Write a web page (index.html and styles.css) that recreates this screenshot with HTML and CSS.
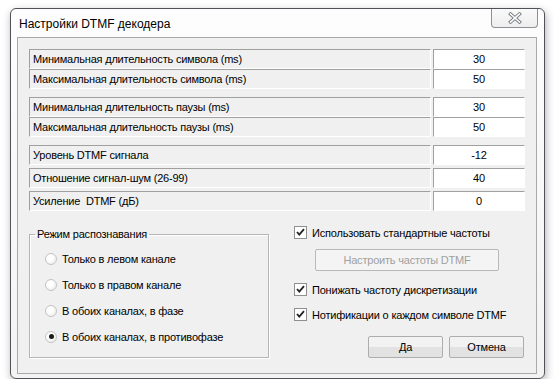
FILE: index.html
```html
<!DOCTYPE html>
<html lang="ru">
<head>
    <meta charset="UTF-8">
    <title>Настройки DTMF декодера</title>
    <link rel="stylesheet" href="styles.css">
</head>
<body>
    <div class="window">
        <div class="titlebar">
            <span class="title">Настройки DTMF декодера</span>
            <button class="close-btn" aria-label="Закрыть">
                <svg width="16" height="12" viewBox="0 0 16 12">
                    <path d="M3.5 2 L12.5 10 M12.5 2 L3.5 10" stroke="#767b80" stroke-width="3.4" stroke-linecap="square" fill="none"/>
                    <path d="M3.5 2 L12.5 10 M12.5 2 L3.5 10" stroke="#ffffff" stroke-width="1.6" stroke-linecap="square" fill="none"/>
                </svg>
            </button>
        </div>

        <div class="client">
            <!-- Symbol timing -->
            <div class="field-group tight">
                <div class="field">
                    <div class="field-label">Минимальная длительность символа (ms)</div>
                    <div class="field-value">30</div>
                </div>
                <div class="field">
                    <div class="field-label">Максимальная длительность символа (ms)</div>
                    <div class="field-value">50</div>
                </div>
            </div>

            <!-- Pause timing -->
            <div class="field-group tight">
                <div class="field">
                    <div class="field-label">Минимальная длительность паузы (ms)</div>
                    <div class="field-value">30</div>
                </div>
                <div class="field">
                    <div class="field-label">Максимальная длительность паузы (ms)</div>
                    <div class="field-value">50</div>
                </div>
            </div>

            <!-- Signal -->
            <div class="field-group loose">
                <div class="field">
                    <div class="field-label">Уровень DTMF сигнала</div>
                    <div class="field-value">-12</div>
                </div>
                <div class="field">
                    <div class="field-label">Отношение сигнал-шум (26-99)</div>
                    <div class="field-value">40</div>
                </div>
                <div class="field">
                    <div class="field-label">Усиление&nbsp; DTMF (дБ)</div>
                    <div class="field-value">0</div>
                </div>
            </div>

            <div class="bottom">
                <fieldset class="groupbox">
                    <legend>Режим распознавания</legend>
                    <label class="radio-row"><span class="radio"></span>Только в левом канале</label>
                    <label class="radio-row"><span class="radio"></span>Только в правом канале</label>
                    <label class="radio-row"><span class="radio"></span>В обоих каналах, в фазе</label>
                    <label class="radio-row"><span class="radio checked"></span>В обоих каналах, в противофазе</label>
                </fieldset>

                <div class="options">
                    <label class="check-row"><span class="checkbox"><svg width="11" height="11" viewBox="0 0 11 11"><path d="M2 5 L4.3 7.6 L9 2.2" stroke="#222" stroke-width="1.8" fill="none"/></svg></span>Использовать стандартные частоты</label>
                    <button class="btn btn-wide" disabled>Настроить частоты DTMF</button>
                    <label class="check-row"><span class="checkbox"><svg width="11" height="11" viewBox="0 0 11 11"><path d="M2 5 L4.3 7.6 L9 2.2" stroke="#222" stroke-width="1.8" fill="none"/></svg></span>Понижать частоту дискретизации</label>
                    <label class="check-row"><span class="checkbox"><svg width="11" height="11" viewBox="0 0 11 11"><path d="M2 5 L4.3 7.6 L9 2.2" stroke="#222" stroke-width="1.8" fill="none"/></svg></span>Нотификации о каждом символе DTMF</label>
                    <div class="actions">
                        <button class="btn">Да</button>
                        <button class="btn">Отмена</button>
                    </div>
                </div>
            </div>
        </div>
    </div>
</body>
</html>
```

FILE: styles.css
```css
* {
    margin: 0;
    padding: 0;
    box-sizing: border-box;
}

body {
    background: #ffffff;
    font-family: "Liberation Sans", Arial, sans-serif;
    font-size: 11px;
    letter-spacing: -0.2px;
    color: #000;
}

.window {
    margin: 8px 0 0 10px;
    width: 535px;
    height: 371px;
    border: 1px solid #4f5358;
    border-radius: 6px;
    background: linear-gradient(#fdfdfd, #f3f3f3);
    box-shadow: 1px 3px 9px rgba(0, 0, 0, 0.3);
    display: flex;
    flex-direction: column;
    padding: 0 7px 4px 6px;
}

.titlebar {
    height: 28px;
    display: flex;
    align-items: flex-start;
    justify-content: space-between;
}

.title {
    font-size: 12px;
    letter-spacing: 0;
    padding: 8px 0 0 2px;
    color: #000;
}

.close-btn {
    width: 47px;
    height: 19px;
    margin-right: -1px;
    border: 1px solid #8d9196;
    border-top: none;
    border-radius: 0 0 4px 4px;
    background: linear-gradient(#fafafa, #eeeeee);
    display: flex;
    align-items: center;
    justify-content: center;
}

.client {
    flex: 1;
    background: #f0f0f0;
    border: 1px solid #a9a9a9;
    padding: 11px 11px 0 11px;
}

.field-group {
    display: flex;
    flex-direction: column;
    margin-bottom: 8px;
}

.field-group.tight {
    gap: 0;
}

.field-group.loose {
    gap: 3px;
}

.field {
    display: flex;
    gap: 2px;
    height: 20px;
}

.field-label,
.field-value {
    border-top: 1px solid #a0a0a0;
    border-left: 1px solid #a0a0a0;
    border-right: 1px solid #ffffff;
    border-bottom: 1px solid #ffffff;
    display: flex;
    align-items: center;
}

.field-label {
    flex: 1;
    padding-left: 3px;
}

.field-value {
    width: 92px;
    background: #ffffff;
    justify-content: center;
}

.bottom {
    display: flex;
    margin-top: 17px;
}

.groupbox {
    width: 240px;
    height: 130px;
    border: 1px solid #b5b5b5;
    box-shadow: inset 1px 1px 0 #fff, 1px 1px 0 #fff;
    padding: 12px 0 0 0;
    display: flex;
    flex-direction: column;
    gap: 13px;
}

.groupbox legend {
    margin-left: 5px;
    padding: 0 2px;
}

.groupbox .radio-row {
    margin-left: 15px;
}

.radio-row,
.check-row {
    display: flex;
    align-items: center;
    gap: 5px;
    height: 13px;
}

.radio {
    width: 12px;
    height: 12px;
    border-radius: 50%;
    border: 1px solid #c4c4c4;
    background: radial-gradient(circle at 40% 40%, #ffffff 30%, #e4e4e4 100%);
    display: flex;
    align-items: center;
    justify-content: center;
}

.radio.checked::after {
    content: "";
    width: 5px;
    height: 5px;
    border-radius: 50%;
    background: #1a1a1a;
}

.options {
    flex: 1;
    display: flex;
    flex-direction: column;
    margin-top: -2px;
    padding-left: 25px;
}

.checkbox {
    width: 13px;
    height: 13px;
    border: 1px solid #8e8f8f;
    background: #ffffff;
    display: flex;
    align-items: center;
    justify-content: center;
}

.btn {
    font-family: inherit;
    font-size: 11px;
    letter-spacing: -0.2px;
    height: 22px;
    border: 1px solid #adadad;
    border-radius: 2px;
    background: linear-gradient(#f2f2f2 50%, #e2e2e2 50%);
    color: #000;
}

.btn:disabled {
    color: #a0a0a0;
    background: #f4f4f4;
    border-color: #b8b8b8;
}

.btn-wide {
    width: 184px;
    margin: 10px 0 12px 21px;
}

.options .check-row + .check-row {
    margin-top: 12px;
}

.actions {
    display: flex;
    justify-content: flex-end;
    gap: 6px;
    margin-top: 15px;
    margin-right: 1px;
}

.actions .btn {
    width: 75px;
}
```
